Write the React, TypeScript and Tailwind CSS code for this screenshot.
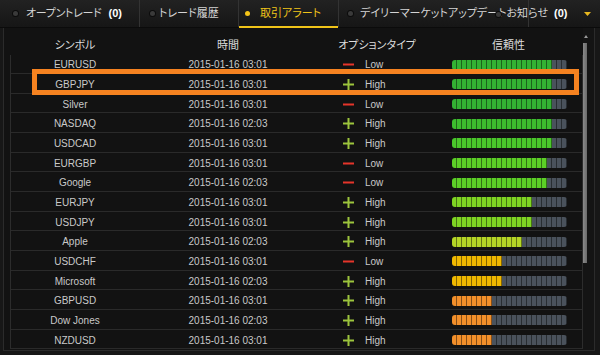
import type { ReactNode } from "react";

interface AlertRow {
  symbol: string;
  time: string;
  type: "High" | "Low";
  level: number;
  color: string;
}

const ROWS: AlertRow[] = [
  { symbol: "EURUSD", time: "2015-01-16 03:01", type: "Low", level: 20, color: "#33b233" },
  { symbol: "GBPJPY", time: "2015-01-16 03:01", type: "High", level: 20, color: "#33b233" },
  { symbol: "Silver", time: "2015-01-16 03:01", type: "Low", level: 20, color: "#33b233" },
  { symbol: "NASDAQ", time: "2015-01-16 02:03", type: "High", level: 20, color: "#3dbd2e" },
  { symbol: "USDCAD", time: "2015-01-16 03:01", type: "High", level: 20, color: "#4ac82b" },
  { symbol: "EURGBP", time: "2015-01-16 03:01", type: "Low", level: 19, color: "#5ccf27" },
  { symbol: "Google", time: "2015-01-16 02:03", type: "Low", level: 19, color: "#5ccf27" },
  { symbol: "EURJPY", time: "2015-01-16 03:01", type: "High", level: 16, color: "#7fd423" },
  { symbol: "USDJPY", time: "2015-01-16 03:01", type: "High", level: 16, color: "#7fd423" },
  { symbol: "Apple", time: "2015-01-16 02:03", type: "High", level: 14, color: "#b4d626" },
  { symbol: "USDCHF", time: "2015-01-16 03:01", type: "Low", level: 10, color: "#f0b800" },
  { symbol: "Microsoft", time: "2015-01-16 02:03", type: "High", level: 10, color: "#f0b800" },
  { symbol: "GBPUSD", time: "2015-01-16 03:01", type: "High", level: 8, color: "#f28f2a" },
  { symbol: "Dow Jones", time: "2015-01-16 02:03", type: "High", level: 8, color: "#f28f2a" },
  { symbol: "NZDUSD", time: "2015-01-16 03:01", type: "High", level: 8, color: "#f28f2a" },
];

const SEGMENTS = 23;

function Dot({ active = false }: { active?: boolean }) {
  return (
    <span
      className={[
        "block h-[5px] w-[5px] shrink-0 rounded-full",
        active ? "bg-[#f5c518]" : "bg-[#3a3a3a] shadow-[0_0_0_1px_#0c0c0c]",
      ].join(" ")}
    />
  );
}

function Tab({
  className,
  children,
}: {
  className: string;
  children: ReactNode;
}) {
  return (
    <div className={"relative flex h-full shrink-0 items-center whitespace-nowrap " + className}>
      {children}
    </div>
  );
}

function ReliabilityBar({ level, color }: { level: number; color: string }) {
  return (
    <div className="flex h-[10px] w-[115px] overflow-hidden rounded-[3px]">
      {Array.from({ length: SEGMENTS }, (_, i) => (
        <div
          key={i}
          className="h-full w-[5px] border-r border-black/45"
          style={{ backgroundColor: i < level ? color : "#4a525c" }}
        />
      ))}
    </div>
  );
}

function TypeIcon({ type }: { type: "High" | "Low" }) {
  if (type === "High") {
    return (
      <svg width="11" height="11" viewBox="0 0 11 11" aria-hidden>
        <rect x="0" y="4.5" width="11" height="2" fill="#9cc43c" />
        <rect x="4.5" y="0" width="2" height="11" fill="#9cc43c" />
      </svg>
    );
  }
  return (
    <svg width="11" height="11" viewBox="0 0 11 11" aria-hidden>
      <rect x="0" y="4.5" width="11" height="2" fill="#e5352a" />
    </svg>
  );
}

export default function App() {
  return (
    <div className="relative h-[355px] w-[600px] overflow-hidden bg-[#171717] font-['Liberation_Sans','Noto_Sans_CJK_JP',sans-serif] text-[#c9c9c9]">
      {/* tabs */}
      <div className="flex h-[28px] border-b border-[#0b0b0b] bg-linear-to-b from-[#222222] to-[#161616] text-[11px] text-[#d4d4d4] [font-feature-settings:'palt']">
        <Tab className="w-[140px] border-r border-[#333333] pl-[13px]">
          <Dot />
          <span className="ml-[8px] tracking-[-0.3px]">オープントレード</span>
          <span className="ml-[7px] font-bold text-white">(0)</span>
        </Tab>
        <Tab className="w-[99px] border-r border-[#333333] pl-[10px]">
          <Dot />
          <span className="ml-[4px]">トレード履歴</span>
        </Tab>
        <Tab className="w-[100px] border-r border-[#333333] pl-[6px] text-[#f0c419]">
          <Dot active />
          <span className="ml-[10px]">取引アラート</span>
          <span className="absolute bottom-[-1px] left-0 right-0 h-[2px] bg-[#f0c419]" />
        </Tab>
        <Tab className="w-[190px] border-r border-[#333333] pl-[9px]">
          <Dot />
          <span className="ml-[7px]">デイリーマーケットアップデートお知らせ</span>
          <span className="ml-[6px] font-bold text-white">(0)</span>
        </Tab>
        <Tab className="flex-1 justify-end pr-[9px]">
          <span className="absolute left-[-33px] top-[11.5px]">
            <Dot />
          </span>
          <svg width="7" height="4" viewBox="0 0 7 4" aria-hidden>
            <path d="M0 0H7L3.5 4Z" fill="#e8b820" />
          </svg>
        </Tab>
      </div>

      {/* body */}
      <div className="flex h-[327px] pb-[4px] pl-[3px] pr-[5px]">
        <div className="flex flex-1 border-x border-b border-[#2b2b2b] bg-[#121212]">
          <div className="flex-1">
            <div className="flex h-[26.5px] pl-[7px] pt-[11px] text-[11px] leading-[13px] text-[#dcdcdc] [font-feature-settings:'palt']">
              <div className="w-[128px] text-center">シンボル</div>
              <div className="w-[178px] text-center">時間</div>
              <div className="w-[120px] text-center">オプションタイプ</div>
              <div className="w-[143px] text-center">信頼性</div>
            </div>
            <div className="ml-[6px] border-x border-[#2c2c2c] text-[10px]">
              {ROWS.map((r) => (
                <div
                  key={r.symbol}
                  className="flex h-[19.66px] items-center border-b border-[#2a2a2a] pt-[2px]"
                >
                  <div className="w-[128px] text-center">{r.symbol}</div>
                  <div className="w-[178px] text-center">{r.time}</div>
                  <div className="flex w-[135px] items-center pl-[26px]">
                    <TypeIcon type={r.type} />
                    <span className="ml-[11px]">{r.type}</span>
                  </div>
                  <ReliabilityBar level={r.level} color={r.color} />
                </div>
              ))}
            </div>
          </div>
          {/* scrollbar */}
          <div className="flex w-[11px] flex-col bg-[#141414] pt-[7px]">
            <svg className="ml-[1px]" width="4" height="3" viewBox="0 0 4 3" aria-hidden>
              <path d="M0 3H4L2 0Z" fill="#9a9a9a" />
            </svg>
            <div className="mt-[5px] h-[220px] w-[4px] bg-linear-to-r from-[#8a8a8a] to-[#6a6a6a]" />
          </div>
        </div>
      </div>

      {/* highlight */}
      <div className="absolute left-[32px] top-[69px] h-[26px] w-[547px] border-[5px] border-[#f58220]" />
    </div>
  );
}
